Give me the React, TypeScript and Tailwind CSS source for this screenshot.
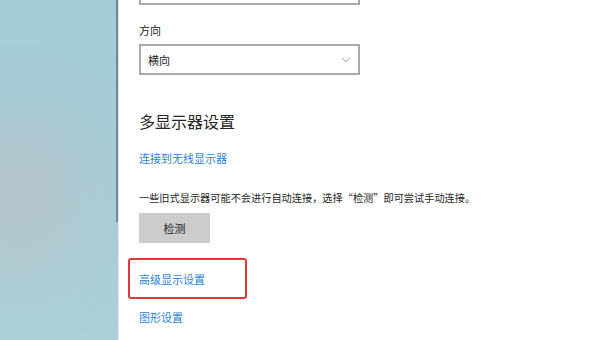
import { ChevronDown } from 'lucide-react';

const font = { fontFamily: '"Noto Sans CJK SC", "Microsoft YaHei", sans-serif' };

function SelectBox({ value, className = '' }: { value?: string; className?: string }) {
  return (
    <div
      className={`w-[221px] flex items-center justify-between pl-[7px] pr-[5px] border-2 border-[#a9a9a9] bg-white ${className}`}
    >
      <span className="text-[11px] leading-4 text-[#222]">{value}</span>
      <ChevronDown className="w-[14px] h-[14px] text-[#8a8a8a]" strokeWidth={1.5} />
    </div>
  );
}

export default function App() {
  return (
    <div className="w-[600px] h-[340px] flex overflow-hidden bg-white" style={font}>
      {/* desktop / left pane */}
      <div className="relative w-[119px] h-full overflow-hidden bg-gradient-to-b from-[#a2cdd8] via-[#a9cdd5] to-[#acd0d6]">
        <div className="absolute top-[120px] -left-[30px] w-[100px] h-[150px] rounded-full bg-[#c3bcc6]/60 blur-2xl" />
        <div className="absolute top-0 left-[116px] w-[2px] h-[222px] bg-[#6f8c94]" />
        <div className="absolute top-0 right-0 w-[1px] h-full bg-[#d6ecf2]" />
      </div>

      <div className="flex-1 flex flex-col items-start pl-[20px]">
        <SelectBox className="h-[32px] -mt-[27px]" />

        <p className="mt-[17px] text-[11px] leading-4 text-[#222]">方向</p>
        <SelectBox value="横向" className="mt-[6px] h-[31px]" />

        <h2 className="mt-[36px] text-[16px] leading-5 text-[#262626]">多显示器设置</h2>

        <a className="mt-[20px] text-[11px] leading-[14px] text-[#2b7fd2]">连接到无线显示器</a>

        <p className="mt-[26px] text-[10.2px] leading-[14px] text-[#262626]">
          一些旧式显示器可能不会进行自动连接，选择“检测”即可尝试手动连接。
        </p>

        <button className="mt-[8px] w-[71px] h-[30px] bg-[#cccccc] text-[11px] text-[#222]">检测</button>

        <div className="mt-[15px] -ml-[11px] w-[119px] h-[41px] flex items-center pl-[9px] border-2 border-[#e0393c] rounded-[3px]">
          <a className="text-[11px] leading-[14px] text-[#2b7fd2]">高级显示设置</a>
        </div>

        <a className="mt-[11px] text-[11px] leading-[14px] text-[#2b7fd2]">图形设置</a>
      </div>
    </div>
  );
}
